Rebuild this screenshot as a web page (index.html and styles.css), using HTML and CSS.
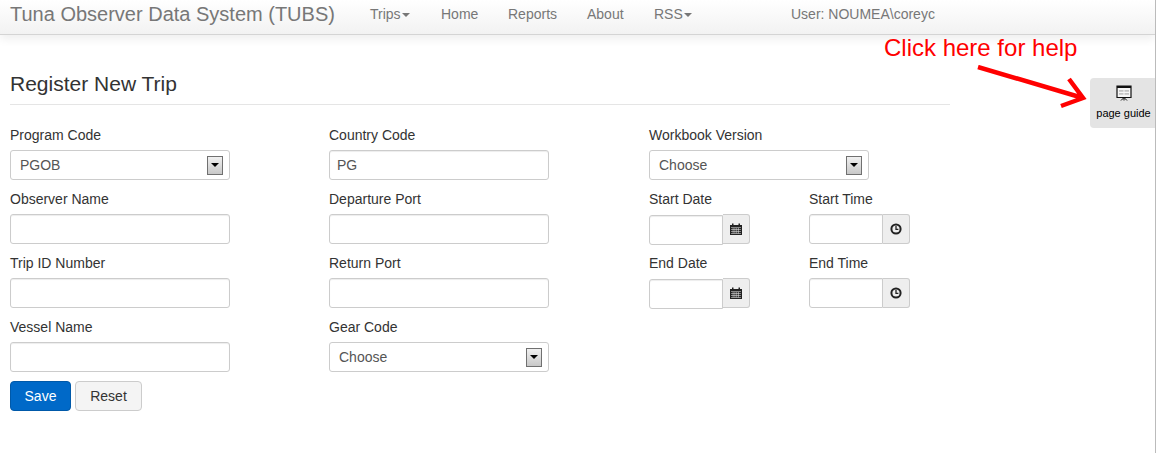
FILE: index.html
```html
<!DOCTYPE html>
<html lang="en">
<head>
  <meta charset="UTF-8" />
  <title>Register New Trip - TUBS</title>
  <link rel="stylesheet" href="styles.css">
</head>
<body>

  <nav class="navbar">
    <a class="brand" href="#">Tuna Observer Data System (TUBS)</a>
    <ul class="nav-links">
      <li class="nav-trips"><a href="#">Trips<span class="caret"></span></a></li>
      <li class="nav-home"><a href="#">Home</a></li>
      <li class="nav-reports"><a href="#">Reports</a></li>
      <li class="nav-about"><a href="#">About</a></li>
      <li class="nav-rss"><a href="#">RSS<span class="caret"></span></a></li>
    </ul>
    <span class="nav-user">User: NOUMEA\coreyc</span>
  </nav>

  <main class="page">
    <h2 class="page-title">Register New Trip</h2>

    <form class="trip-form">
      <div class="field">
        <label>Program Code</label>
        <div class="select"><span>PGOB</span><i class="select-btn"></i></div>
      </div>
      <div class="field">
        <label>Country Code</label>
        <input type="text" value="PG" />
      </div>
      <div class="field">
        <label>Workbook Version</label>
        <div class="select"><span>Choose</span><i class="select-btn"></i></div>
      </div>

      <div class="field">
        <label>Observer Name</label>
        <input type="text" />
      </div>
      <div class="field">
        <label>Departure Port</label>
        <input type="text" />
      </div>
      <div class="field-pair">
        <div class="field">
          <label>Start Date</label>
          <div class="input-group date-group">
            <input type="text" />
            <span class="addon">
              <svg width="12" height="12" viewBox="0 0 12 12"><path class="ico" d="M0 2h2V.5h1.500V2h5V.5H10V2h2v10H0z"/><path class="ico-cut" d="M1 4.500h10v.5H1zM1 6.400h10v.5H1zM1 8.300h10v.5H1zM1 10.200h10v.5H1zM2.800 4.500h.5v6.300h-.5zM4.700 4.500h.5v6.300h-.5zM6.600 4.500h.5v6.300h-.5zM8.500 4.500h.5v6.300h-.5z"/></svg>
            </span>
          </div>
        </div>
        <div class="field">
          <label>Start Time</label>
          <div class="input-group">
            <input type="text" />
            <span class="addon">
              <svg width="12" height="12" viewBox="0 0 12 12"><circle class="ring" cx="6" cy="6" r="4.600"/><path class="hand" d="M6 3v3.300h2.400"/></svg>
            </span>
          </div>
        </div>
      </div>

      <div class="field">
        <label>Trip ID Number</label>
        <input type="text" />
      </div>
      <div class="field">
        <label>Return Port</label>
        <input type="text" />
      </div>
      <div class="field-pair">
        <div class="field">
          <label>End Date</label>
          <div class="input-group date-group">
            <input type="text" />
            <span class="addon">
              <svg width="12" height="12" viewBox="0 0 12 12"><path class="ico" d="M0 2h2V.5h1.500V2h5V.5H10V2h2v10H0z"/><path class="ico-cut" d="M1 4.500h10v.5H1zM1 6.400h10v.5H1zM1 8.300h10v.5H1zM1 10.200h10v.5H1zM2.800 4.500h.5v6.300h-.5zM4.700 4.500h.5v6.300h-.5zM6.600 4.500h.5v6.300h-.5zM8.500 4.500h.5v6.300h-.5z"/></svg>
            </span>
          </div>
        </div>
        <div class="field">
          <label>End Time</label>
          <div class="input-group">
            <input type="text" />
            <span class="addon">
              <svg width="12" height="12" viewBox="0 0 12 12"><circle class="ring" cx="6" cy="6" r="4.600"/><path class="hand" d="M6 3v3.300h2.400"/></svg>
            </span>
          </div>
        </div>
      </div>

      <div class="field">
        <label>Vessel Name</label>
        <input type="text" />
      </div>
      <div class="field">
        <label>Gear Code</label>
        <div class="select"><span>Choose</span><i class="select-btn"></i></div>
      </div>
    </form>

    <div class="actions">
      <button class="btn btn-save" type="button">Save</button>
      <button class="btn btn-reset" type="button">Reset</button>
    </div>
  </main>

  <!-- help callout drawn over the page -->
  <div class="help-text">Click here for help</div>
  <svg class="help-arrow" width="120" height="50" viewBox="0 0 120 50">
    <path d="M2 2L107 33M85 41L107 33L93 14" />
  </svg>

  <a class="page-guide" href="#">
    <svg width="16" height="16" viewBox="0 0 16 16">
      <path class="pg-screen" d="M1 1h14v11.500H1z"/>
      <path class="pg-top" d="M1 1h14v2H1z"/>
      <path class="pg-bar" d="M3 5h4.500v1.800H3zM8.500 5H13v1.800H8.500zM3 8h4.500v1.800H3zM8.500 8H13v1.800H8.500z"/>
      <path class="pg-leg" d="M8 12.500v3M8 12.500l-3 3M8 12.500l3 3"/>
    </svg>
    <span>page guide</span>
  </a>

</body>
</html>
```

FILE: styles.css
```css
* {
  box-sizing: border-box;
}

html, body {
  height: 100%;
}

body {
  margin: 0;
  font-family: "Liberation Sans", Arial, sans-serif;
  font-size: 14px;
  color: #333;
  background: #fff;
  border-right: 1px solid #bbb;
  overflow: hidden;
}

a {
  color: inherit;
  text-decoration: none;
}

/* navbar */
.navbar {
  display: flex;
  align-items: center;
  height: 35px;
  padding: 0 0 6px 10px;
  background: linear-gradient(to bottom, #fff, #f2f2f2);
  border-bottom: 1px solid #d4d4d4;
  box-shadow: 0 4px 9px rgba(0, 0, 0, 0.07);
  color: #777;
}

.brand {
  font-size: 20px;
  width: 360px;
}

.nav-links {
  display: flex;
  list-style: none;
  margin: 0;
  padding: 0;
}

.nav-trips { width: 71px; }
.nav-home { width: 67px; }
.nav-reports { width: 79px; }
.nav-about { width: 67px; }
.nav-rss { width: 137px; }

.caret {
  display: inline-block;
  margin-left: 1px;
  vertical-align: middle;
  border-top: 4px solid #777;
  border-left: 4px solid transparent;
  border-right: 4px solid transparent;
}

/* page */
.page {
  width: 960px;
  padding: 0 10px;
}

.page-title {
  margin: 37px 0 0;
  padding-bottom: 8px;
  width: 940px;
  font-size: 21px;
  line-height: 24px;
  font-weight: 400;
  border-bottom: 1px solid #e5e5e5;
}

.trip-form {
  display: grid;
  grid-template-columns: 319px 320px 301px;
  margin-top: 22px;
}

.field {
  height: 64px;
}

.field-pair {
  display: grid;
  grid-template-columns: 160px 141px;
}

label {
  display: block;
  height: 17px;
  margin-bottom: 6px;
  line-height: 17px;
}

input[type="text"],
.select {
  display: block;
  width: 220px;
  height: 30px;
  padding: 0 9px;
  font-family: inherit;
  font-size: 14px;
  color: #555;
  background: #fff;
  border: 1px solid #ccc;
  border-radius: 3px;
  outline: none;
}

input[type="text"] {
  padding-left: 7px;
  box-shadow: inset 0 1px 1px rgba(0, 0, 0, 0.075);
}

.select {
  display: flex;
  align-items: center;
  justify-content: space-between;
  padding-right: 6px;
}

.select-btn {
  position: relative;
  display: block;
  width: 16px;
  height: 19px;
  background: linear-gradient(to bottom, #f0f0f0, #c8c8c8);
  border: 1px solid #707070;
}

.select-btn::after {
  content: "";
  position: absolute;
  left: 3px;
  top: 6px;
  border-top: 4px solid #000;
  border-left: 4px solid transparent;
  border-right: 4px solid transparent;
}

.input-group {
  display: flex;
  width: 101px;
  height: 30px;
}

.input-group input[type="text"] {
  width: 74px;
  border-radius: 3px 0 0 3px;
}

.date-group input[type="text"] {
  margin-top: 1px;
}

.addon {
  display: flex;
  align-items: center;
  justify-content: center;
  width: 27px;
  background: #eee;
  border: 1px solid #ccc;
  border-left: 0;
  border-radius: 0 3px 3px 0;
}

.ico { fill: #222; }
.ico-cut { fill: #eee; }
.ring { fill: none; stroke: #222; stroke-width: 2; }
.hand { fill: none; stroke: #222; stroke-width: 1.300; }

/* buttons */
.actions {
  display: flex;
  gap: 4px;
  margin-top: -2px;
}

.btn {
  height: 30px;
  font-family: inherit;
  font-size: 14px;
  border-radius: 4px;
  padding: 0;
}

.btn-save {
  width: 61px;
  color: #fff;
  background: #0069c8;
  border: 1px solid #0059a9;
}

.btn-reset {
  width: 67px;
  color: #333;
  background: #f4f4f4;
  border: 1px solid #ccc;
}

/* help callout */
.help-text {
  position: absolute;
  left: 884px;
  top: 34px;
  font-size: 24px;
  line-height: 27px;
  color: #f00;
}

.help-arrow {
  position: absolute;
  left: 976px;
  top: 65px;
}

.help-arrow path {
  fill: none;
  stroke: #f00;
  stroke-width: 4.500;
}

.page-guide {
  position: absolute;
  left: 1090px;
  top: 78px;
  width: 65px;
  height: 50px;
  display: flex;
  flex-direction: column;
  align-items: center;
  padding-top: 7px;
  padding-left: 2px;
  background: #e4e4e4;
  border-radius: 4px 0 0 4px;
  color: #000;
  font-size: 11px;
}

.page-guide span {
  margin-top: 5px;
  line-height: 14px;
}

.pg-screen { fill: #f6f6f6; stroke: #111; stroke-width: 1.200; }
.pg-top { fill: #111; }
.pg-bar { fill: #c4c4c4; }
.pg-leg { fill: none; stroke: #111; stroke-width: 1; }
```
